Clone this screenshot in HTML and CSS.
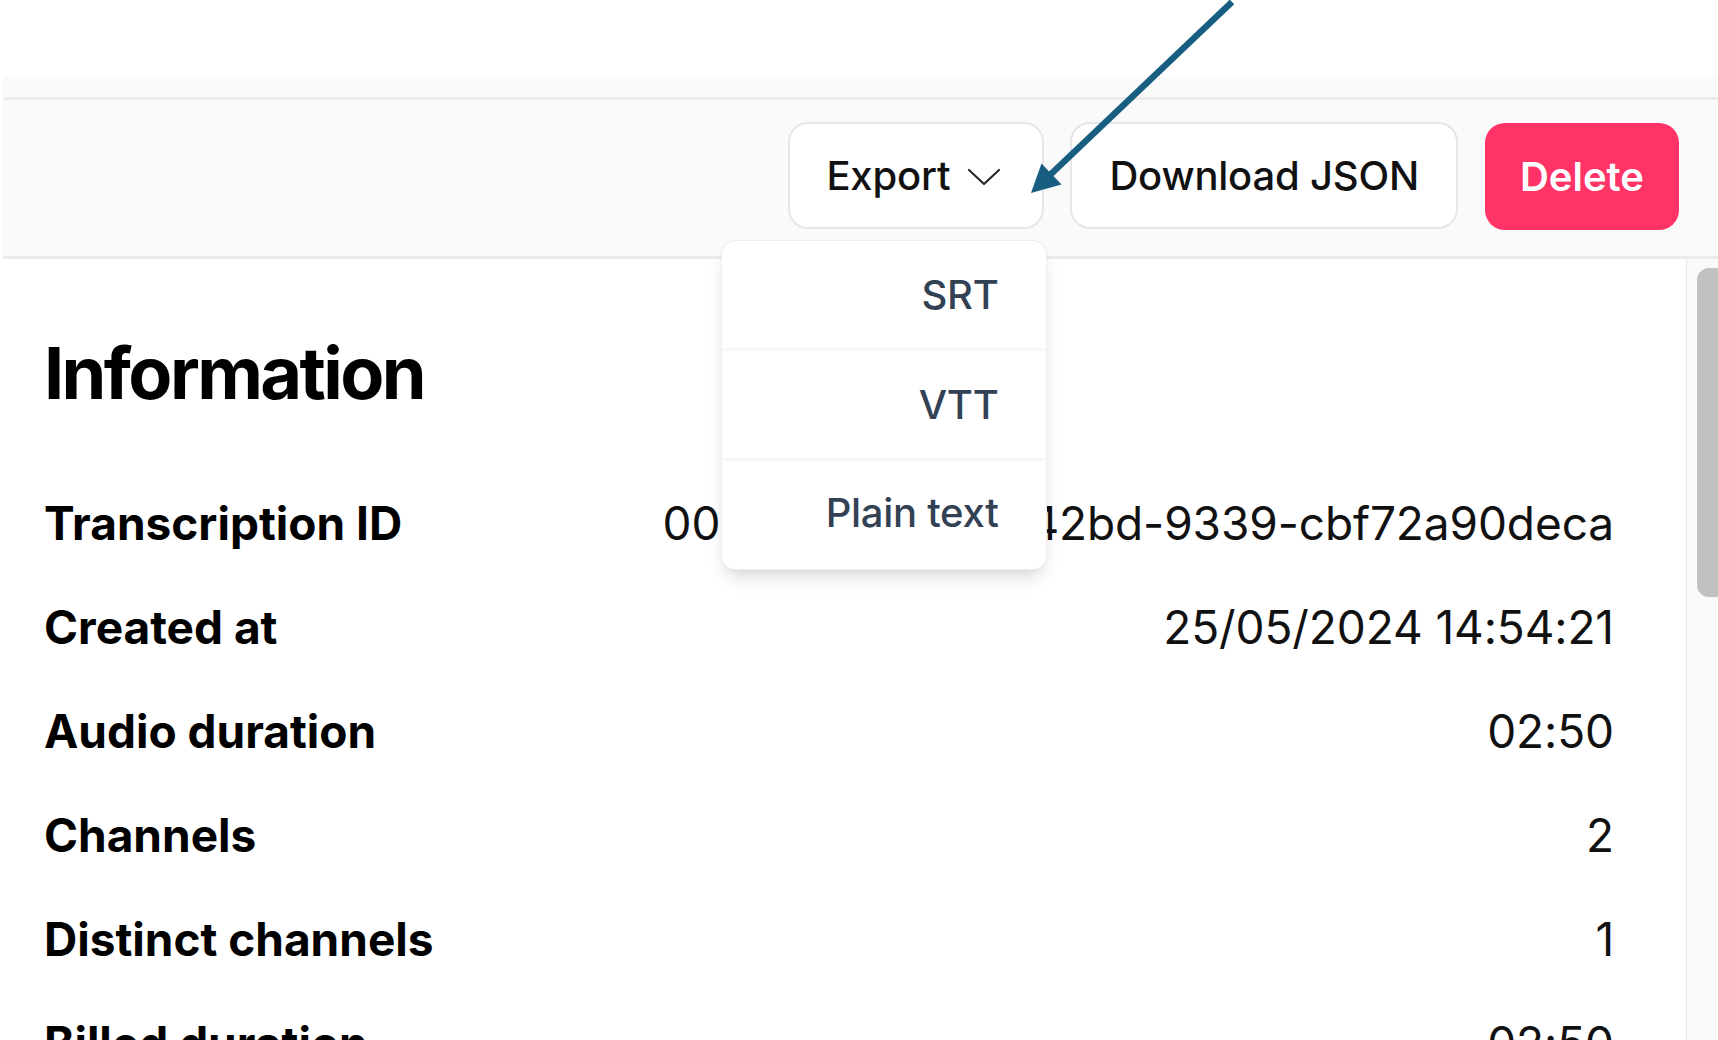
FILE: index.html
```html
<!DOCTYPE html>
<html lang="en">
<head>
<meta charset="utf-8">
<title>Transcription</title>
<link rel="stylesheet" href="styles.css">
</head>
<body>
<div class="page">
  <div class="topband"></div>
  <div class="toolbar">
    <div class="export-wrap">
      <button class="btn btn-light export-btn">
        <span>Export</span>
        <svg class="chev" width="34" height="18" viewBox="0 0 34 18"><path d="M2 2 L17 16 L32 2" fill="none" stroke="#2a2a2a" stroke-width="2.2" stroke-linecap="round" stroke-linejoin="round"/></svg>
      </button>
      <div class="menu">
        <div class="menu-item">SRT</div>
        <div class="menu-item">VTT</div>
        <div class="menu-item">Plain text</div>
      </div>
    </div>
    <button class="btn btn-light download-btn">Download JSON</button>
    <button class="btn btn-danger">Delete</button>
  </div>
  <div class="content">
    <div class="main">
      <h1 class="title">Information</h1>
      <div class="row"><span class="label">Transcription ID</span><span class="value">00958bce-8f2b-42bd-9339-cbf72a90deca</span></div>
      <div class="row"><span class="label">Created at</span><span class="value">25/05/2024 14:54:21</span></div>
      <div class="row"><span class="label">Audio duration</span><span class="value">02:50</span></div>
      <div class="row"><span class="label">Channels</span><span class="value">2</span></div>
      <div class="row"><span class="label">Distinct channels</span><span class="value">1</span></div>
      <div class="row"><span class="label">Billed duration</span><span class="value">02:50</span></div>
    </div>
    <div class="scrolltrack"><div class="thumb"></div></div>
  </div>
</div>
<svg class="annotation" width="1718" height="1040" viewBox="0 0 1718 1040">
  <line x1="1232" y1="2" x2="1050" y2="175" stroke="#185e80" stroke-width="6.5"/>
  <polygon points="1031,193 1041.5,163.5 1061.5,184.5" fill="#185e80"/>
</svg>
</body>
</html>
```

FILE: styles.css
```css
* { box-sizing: border-box; }
html, body {
  margin: 0;
  padding: 0;
  width: 1718px;
  height: 1040px;
  overflow: hidden;
  background: #ffffff;
  font-family: Inter, "Noto Sans", "Liberation Sans", sans-serif;
  color: #111111;
}
.page {
  position: relative;
  padding: 77px 0 0 3px;
  height: 1040px;
  display: flex;
  flex-direction: column;
}
.topband {
  height: 23px;
  background: #fafafa;
  border-bottom: 3px solid #ececec;
}
.toolbar {
  height: 159px;
  background: #fafafa;
  border-bottom: 3px solid #ececec;
  display: flex;
  justify-content: flex-end;
  align-items: flex-start;
  gap: 26px;
  padding: 22px 39px 0 0;
  position: relative;
  z-index: 2;
}
.export-wrap {
  position: relative;
}
.btn {
  font-family: inherit;
  font-size: 40px;
  line-height: 48px;
  height: 107px;
  border-radius: 20px;
  cursor: pointer;
  display: flex;
  align-items: center;
}
.btn-light {
  background: #ffffff;
  border: 2px solid #e6e6e6;
  color: #111111;
  font-weight: 450;
  padding: 0 35px;
  letter-spacing: -0.2px;
}
.download-btn {
  padding: 0 37px;
}
.export-btn {
  padding: 0 41px 0 36px;
  gap: 17px;
  width: 256px;
}
.chev { display: block; margin-top: 2px; }
.btn-danger {
  background: #ff3366;
  border: none;
  color: #ffffff;
  font-weight: 600;
  padding: 0 35px;
  height: 107px;
  margin-top: 1px;
  margin-left: 1px;
}
.menu {
  position: absolute;
  top: 118px;
  right: -3px;
  width: 326px;
  background: #ffffff;
  border: 1px solid #ededed;
  border-radius: 14px;
  box-shadow: 0 12px 18px -4px rgba(0,0,0,0.12), 0 4px 8px -4px rgba(0,0,0,0.08);
  overflow: hidden;
}
.menu-item {
  height: 107px;
  display: flex;
  align-items: center;
  justify-content: flex-end;
  padding-right: 48px;
  font-size: 40px;
  font-weight: 500;
  color: #334155;
  letter-spacing: -0.3px;
}
.menu-item + .menu-item {
  height: 110px;
  border-top: 3px solid #f7f7f7;
}
.menu-item:last-child {
  height: 111px;
  padding-bottom: 5px;
}
.content {
  flex: 1;
  display: flex;
  min-height: 0;
}
.main {
  flex: 1;
  padding: 71px 72px 0 41px;
}
.title {
  margin: 0 0 55px 0;
  font-size: 72px;
  line-height: 86px;
  font-weight: 700;
  letter-spacing: -2.6px;
  color: #000000;
}
.row {
  display: flex;
  justify-content: space-between;
  align-items: center;
  height: 104px;
  font-size: 46px;
  line-height: 104px;
  white-space: nowrap;
}
.label {
  font-weight: 700;
  color: #000000;
  letter-spacing: 0;
}
.value {
  font-weight: 400;
  color: #111111;
  letter-spacing: -0.1px;
}
.scrolltrack {
  width: 32px;
  border-left: 1px solid #e8e8e8;
  background: #fafafa;
  overflow: hidden;
  padding: 9px 0 0 10px;
}
.thumb {
  width: 30px;
  height: 329px;
  border-radius: 12px;
  background: #c1c1c1;
}
.annotation {
  position: absolute;
  left: 0;
  top: 0;
  z-index: 5;
  pointer-events: none;
}
```
